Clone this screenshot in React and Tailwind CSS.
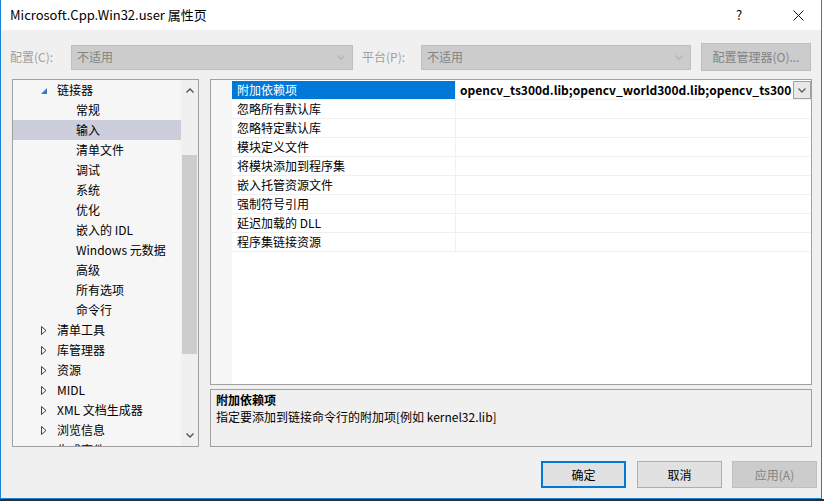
const treeItems = [
  { label: '链接器', level: 1, expanded: true },
  { label: '常规', level: 2 },
  { label: '输入', level: 2, selected: true },
  { label: '清单文件', level: 2 },
  { label: '调试', level: 2 },
  { label: '系统', level: 2 },
  { label: '优化', level: 2 },
  { label: '嵌入的 IDL', level: 2 },
  { label: 'Windows 元数据', level: 2 },
  { label: '高级', level: 2 },
  { label: '所有选项', level: 2 },
  { label: '命令行', level: 2 },
  { label: '清单工具', level: 1 },
  { label: '库管理器', level: 1 },
  { label: '资源', level: 1 },
  { label: 'MIDL', level: 1 },
  { label: 'XML 文档生成器', level: 1 },
  { label: '浏览信息', level: 1 },
  { label: '生成事件', level: 1 },
];

const props = [
  '附加依赖项',
  '忽略所有默认库',
  '忽略特定默认库',
  '模块定义文件',
  '将模块添加到程序集',
  '嵌入托管资源文件',
  '强制符号引用',
  '延迟加载的 DLL',
  '程序集链接资源',
];

function Chevron({ up = false, color = '#606060', w = 8, h = 5 }) {
  return (
    <svg width={w} height={h} viewBox="0 0 8 5">
      <path
        d={up ? 'M0.5 4.5 L4 1 L7.5 4.5' : 'M0.5 0.5 L4 4 L7.5 0.5'}
        fill="none"
        stroke={color}
        strokeWidth="1.3"
      />
    </svg>
  );
}

function Combo({ width }) {
  return (
    <div
      className={`${width} h-[25px] bg-[#cccccc] border border-[#bfbfbf] flex items-center justify-between pl-[5px] pr-[7px] text-[#838383]`}
    >
      <span>不适用</span>
      <Chevron color="#b4b4b4" />
    </div>
  );
}

function TreeRow({ item }) {
  return (
    <div
      className={`h-[20px] flex items-center shrink-0 ${item.selected ? 'bg-[#cccedb]' : ''} ${
        item.level === 1 ? 'pl-[28px]' : 'pl-[63px]'
      }`}
    >
      {item.level === 1 && (
        <span className="w-[16px] flex items-center">
          {item.expanded ? (
            <svg width="6" height="6" viewBox="0 0 6 6" className="mt-[2px]">
              <path d="M6 0 L6 6 L0 6 Z" fill="#3b79c4" />
            </svg>
          ) : (
            <svg width="6" height="9" viewBox="0 0 6 9">
              <path d="M0.5 0.5 L5 4.5 L0.5 8.5 Z" fill="none" stroke="#404040" strokeWidth="1" />
            </svg>
          )}
        </span>
      )}
      <span className="whitespace-nowrap">{item.label}</span>
    </div>
  );
}

export default function App() {
  return (
    <div className="w-[824px] h-[501px] bg-white flex flex-col overflow-hidden font-['Noto_Sans_CJK_SC','Noto_Sans',sans-serif] text-[12px] leading-[16px] text-black">
      <div className="w-[822px] h-[499px] border-x border-b border-[#1883d7] flex flex-col">
        {/* title bar */}
        <div className="h-[30px] bg-white flex items-center pl-[9px] shrink-0">
          <span className="text-[13px] flex-1">Microsoft.Cpp.Win32.user 属性页</span>
          <span className="w-[24px] text-center text-[13px] mr-[24px]">?</span>
          <span className="w-[46px] flex justify-center">
            <svg width="11" height="11" viewBox="0 0 11 11">
              <path d="M0.5 0.5 L10.5 10.5 M10.5 0.5 L0.5 10.5" stroke="#111" strokeWidth="1" />
            </svg>
          </span>
        </div>

        <div className="flex-1 bg-[#f0f0f0] flex flex-col pl-[9px] pr-[4px]">
          {/* configuration row */}
          <div className="h-[28px] mt-[13px] flex items-center text-[#a0a0a0] shrink-0">
            <span className="w-[61px]">配置(C):</span>
            <Combo width="w-[282px]" />
            <span className="ml-[9px] w-[59px]">平台(P):</span>
            <Combo width="w-[270px]" />
            <div className="ml-[10px] w-[110px] h-[28px] bg-[#cccccc] border border-[#bfbfbf] flex items-center justify-center text-[#838383]">
              配置管理器(O)...
            </div>
          </div>

          {/* main area */}
          <div className="mt-[8px] flex gap-[11px] h-[368px] shrink-0">
            <div className="ml-[2px] w-[187px] border border-[#a0a0a0] bg-[#f6f6f6] flex overflow-hidden">
              <div className="flex-1 flex flex-col overflow-hidden">
                {treeItems.map((item) => (
                  <TreeRow key={item.label} item={item} />
                ))}
              </div>
              <div className="w-[17px] bg-[#f0f0f0] flex flex-col items-center">
                <div className="h-[17px] flex items-center justify-center mt-[2px]">
                  <Chevron up color="#505050" />
                </div>
                <div className="h-[56px]" />
                <div className="w-[15px] h-[199px] bg-[#cdcdcd]" />
                <div className="flex-1" />
                <div className="h-[17px] flex items-center justify-center mb-[2px]">
                  <Chevron color="#505050" />
                </div>
              </div>
            </div>

            <div className="w-[602px] flex flex-col gap-[4px]">
              {/* property grid */}
              <div className="h-[306px] border border-[#a0a0a0] bg-white flex">
                <div className="w-[21px] bg-[#f7f7f7]" />
                <div className="flex-1 flex flex-col pt-[1px] overflow-hidden">
                  {props.map((name, i) => (
                    <div key={name} className="h-[19px] flex border-b border-[#f0f0f0] shrink-0">
                      <div
                        className={`w-[224px] flex items-center pl-[5px] border-r border-[#f0f0f0] ${
                          i === 0 ? 'bg-[#0078d7] text-white' : ''
                        }`}
                      >
                        {name}
                      </div>
                      <div className="flex-1 flex items-center pl-[4px] overflow-hidden">
                        {i === 0 && (
                          <>
                            <span className="flex-1 font-bold whitespace-nowrap overflow-hidden">
                              opencv_ts300d.lib;opencv_world300d.lib;opencv_ts300.lib;opencv_world300.lib
                            </span>
                            <span className="w-[18px] h-[18px] border border-[#a0a0a0] bg-[#e8e8e8] flex items-center justify-center ml-[1px]">
                              <Chevron color="#606060" />
                            </span>
                          </>
                        )}
                      </div>
                    </div>
                  ))}
                </div>
              </div>

              {/* description */}
              <div className="h-[58px] border border-[#a0a0a0] bg-[#f0f0f0] pl-[5px] pt-[1px] flex flex-col">
                <span className="font-bold leading-[17px]">附加依赖项</span>
                <span className="leading-[17px]">指定要添加到链接命令行的附加项[例如 kernel32.lib]</span>
              </div>
            </div>
          </div>

          {/* buttons */}
          <div className="mt-[14px] h-[27px] flex justify-end shrink-0">
            <div className="w-[85px] h-[27px] border-2 border-[#0078d7] bg-[#e1e1e1] flex items-center justify-center">
              确定
            </div>
            <div className="ml-[11px] w-[85px] h-[27px] border border-[#adadad] bg-[#e1e1e1] flex items-center justify-center">
              取消
            </div>
            <div className="ml-[10px] w-[85px] h-[27px] border border-[#bfbfbf] bg-[#cccccc] flex items-center justify-center text-[#838383]">
              应用(A)
            </div>
          </div>
        </div>
      </div>
      <div className="h-[2px] bg-[#2d2d30]" />
    </div>
  );
}
